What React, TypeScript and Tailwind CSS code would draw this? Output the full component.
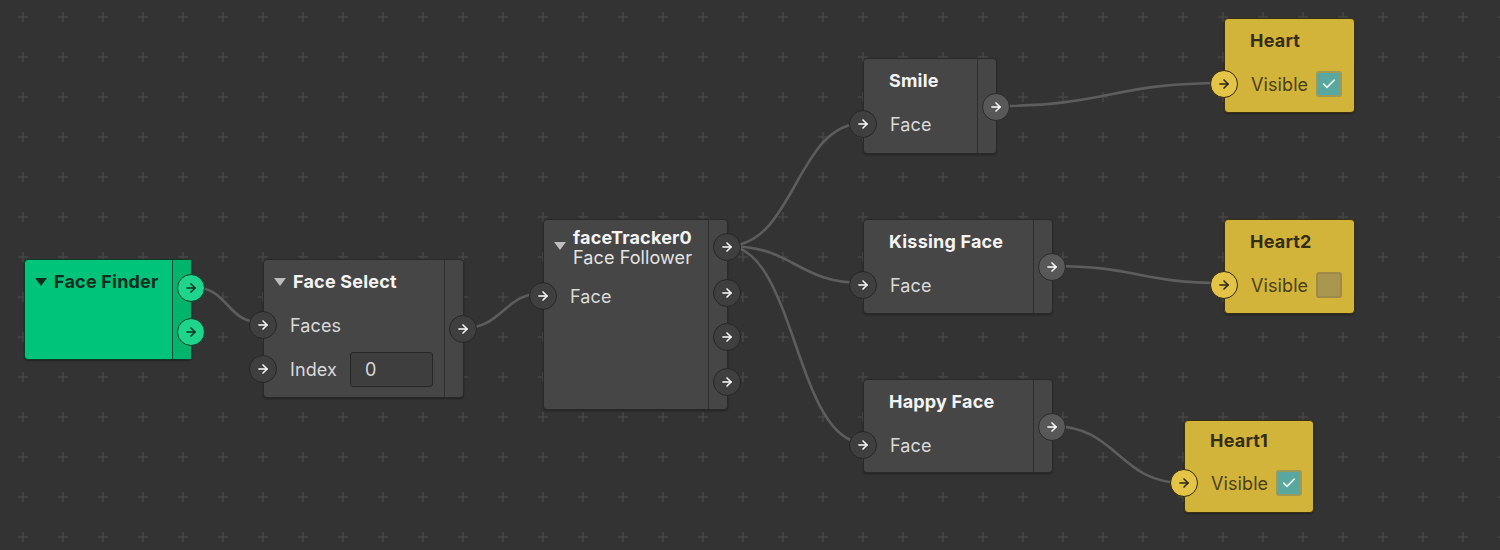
import React from "react";
import { ArrowRight, Check } from "lucide-react";

type Variant = "gray" | "green" | "yellow";

type Row = {
  label: string;
  input?: boolean;
  field?: string;
  checkbox?: "on" | "off";
};

type NodeProps = {
  x: number;
  y: number;
  w: number;
  h: number;
  variant?: Variant;
  title: string;
  subtitle?: string;
  caret?: boolean;
  rows?: Row[];
  outputs?: number[];
  lightOutputs?: boolean;
  compact?: boolean;
};

const Port: React.FC<{ variant: Variant; light?: boolean }> = ({ variant, light }) => {
  const tone =
    variant === "green"
      ? "bg-[#1fd58d] border-[#0f3b27] text-[#10301f]"
      : variant === "yellow"
        ? "bg-[#e4c447] border-[#2d2510] text-[#2a2410]"
        : light
          ? "bg-[#585858] border-[#2a2a2a] text-white"
          : "bg-[#3f3f3f] border-[#272727] text-white";
  return (
    <div className={`w-[28px] h-[28px] rounded-full border-[1.5px] flex items-center justify-center ${tone}`}>
      <ArrowRight size={14} strokeWidth={2.6} />
    </div>
  );
};

const Node: React.FC<NodeProps> = ({
  x,
  y,
  w,
  h,
  variant = "gray",
  title,
  subtitle,
  caret,
  rows = [],
  outputs = [],
  lightOutputs,
  compact,
}) => {
  const shell =
    variant === "green"
      ? "bg-[#00c47a] border-[#0c3a24]"
      : variant === "yellow"
        ? "bg-[#d3b43b] border-[#3a3011]"
        : "bg-[#464646] border-[#2a2a2a]";
  const titleColor =
    variant === "green" ? "text-[#0f2e1e]" : variant === "yellow" ? "text-[#352d12]" : "text-[#f4f4f4]";
  const labelColor = variant === "yellow" ? "text-[#4a4018]" : "text-[#dadada]";
  const caretColor = variant === "green" ? "border-t-[#0f2e1e]" : "border-t-[#bdbdbd]";
  const hasColumn = variant !== "yellow";
  const headH = subtitle ? "h-[54px] pt-[2px]" : compact ? "h-[40px]" : "h-[43px] pt-[1px]";

  return (
    <div
      className={`absolute rounded-[4px] border flex shadow-[0_1px_2px_rgba(0,0,0,0.35)] ${shell}`}
      style={{ left: x, top: y, width: w, height: h }}
    >
      <div className="flex-1 min-w-0 flex flex-col pl-[25px]">
        <div className={`relative flex flex-col justify-center ${headH} ${caret ? "pl-[4px]" : ""}`}>
          {caret && (
            <span
              className={`absolute left-[-15px] w-0 h-0 border-l-[6px] border-r-[6px] border-t-[8px] border-l-transparent border-r-transparent ${caretColor} ${subtitle ? "top-[22px]" : "top-[18px]"}`}
            />
          )}
          <div className={`text-[18px] font-bold leading-[20px] tracking-[0.2px] ${titleColor}`}>{title}</div>
          {subtitle && (
            <div className="text-[18px] leading-[20px] tracking-[0.1px] text-[#e4e4e4]">{subtitle}</div>
          )}
        </div>
        {rows.map((r) => (
          <div
            key={r.label}
            className={`relative h-[44px] flex items-center text-[18px] tracking-[0.1px] pl-[1px] ${
              r.checkbox ? "gap-[8px]" : "gap-[13px]"
            } ${labelColor}`}
          >
            {r.input !== false && (
              <div className="absolute left-[-40px] top-[8px]">
                <Port variant={variant} />
              </div>
            )}
            <span>{r.label}</span>
            {r.field !== undefined && (
              <div className="w-[83px] h-[35px] rounded-[3px] border border-[#262626] bg-[#3e3e3e] flex items-center px-[14px] text-[#d8d8d8]">
                {r.field}
              </div>
            )}
            {r.checkbox && (
              <div
                className={`shrink-0 w-[26px] h-[26px] rounded-[3px] border-2 flex items-center justify-center ${
                  r.checkbox === "on" ? "bg-[#5aa7a0] border-[#9c9a57]" : "bg-[#a9964f] border-[#9d8a46]"
                }`}
              >
                {r.checkbox === "on" && <Check size={16} strokeWidth={2.4} className="text-[#eef3e6]" />}
              </div>
            )}
          </div>
        ))}
      </div>
      {hasColumn && (
        <div
          className={`relative w-[19px] border-l ${
            variant === "green" ? "bg-[#00b46d] border-[#0e4a2e]" : "border-[#2e2e2e]"
          }`}
        >
          {outputs.map((o) => (
            <div key={o} className="absolute left-[4px]" style={{ top: o - 14 }}>
              <Port variant={variant} light={lightOutputs} />
            </div>
          ))}
        </div>
      )}
    </div>
  );
};

const wire = (x1: number, y1: number, x2: number, y2: number) => {
  const d = Math.max(40, (x2 - x1) * 0.5);
  return `M ${x1} ${y1} C ${x1 + d} ${y1}, ${x2 - d} ${y2}, ${x2} ${y2}`;
};

const wires: [number, number, number, number][] = [
  [191, 287, 264, 323],
  [463, 328, 544, 293],
  [727, 246, 864, 123],
  [727, 246, 864, 283],
  [727, 246, 864, 443],
  [996, 106, 1224, 83],
  [1052, 266, 1224, 283],
  [1052, 426, 1184, 483],
];

export default function App() {
  return (
    <div
      className="relative w-[1500px] h-[550px] overflow-hidden bg-[#333333]"
      style={{ fontFamily: "Inter, 'Noto Sans', sans-serif" }}
    >
      <svg className="absolute inset-0" width="1500" height="550">
        <defs>
          <pattern id="grid" x="3" y="-3" width="40" height="40" patternUnits="userSpaceOnUse">
            <path d="M15 20 H25 M20 15 V25" stroke="#454545" strokeWidth="1.6" />
          </pattern>
        </defs>
        <rect width="1500" height="550" fill="url(#grid)" />
        {wires.map(([a, b, c, d], i) => (
          <path key={i} d={wire(a, b, c, d)} stroke="#5d5d5d" strokeWidth="2.6" fill="none" />
        ))}
      </svg>

      <Node x={24} y={259} w={168} h={101} variant="green" caret title="Face Finder" outputs={[28, 72]} />
      <Node
        x={263}
        y={259}
        w={201}
        h={139}
        caret
        title="Face Select"
        rows={[{ label: "Faces" }, { label: "Index", field: "0" }]}
        outputs={[69]}
      />
      <Node
        x={543}
        y={219}
        w={185}
        h={191}
        caret
        title="faceTracker0"
        subtitle="Face Follower"
        rows={[{ label: "Face" }]}
        outputs={[27, 73, 117, 162]}
      />
      <Node x={863} y={58} w={134} h={96} title="Smile" rows={[{ label: "Face" }]} outputs={[48]} lightOutputs />
      <Node
        x={863}
        y={219}
        w={190}
        h={95}
        title="Kissing Face"
        rows={[{ label: "Face" }]}
        outputs={[47]}
        lightOutputs
      />
      <Node
        x={863}
        y={379}
        w={190}
        h={94}
        title="Happy Face"
        rows={[{ label: "Face" }]}
        outputs={[47]}
        lightOutputs
      />
      <Node x={1224} y={18} w={131} h={95} variant="yellow" title="Heart" rows={[{ label: "Visible", checkbox: "on" }]} />
      <Node
        x={1224}
        y={219}
        w={131}
        h={95}
        variant="yellow"
        title="Heart2"
        rows={[{ label: "Visible", checkbox: "off" }]}
      />
      <Node
        x={1184}
        y={420}
        w={130}
        h={93}
        variant="yellow"
        compact
        title="Heart1"
        rows={[{ label: "Visible", checkbox: "on" }]}
      />
    </div>
  );
}
